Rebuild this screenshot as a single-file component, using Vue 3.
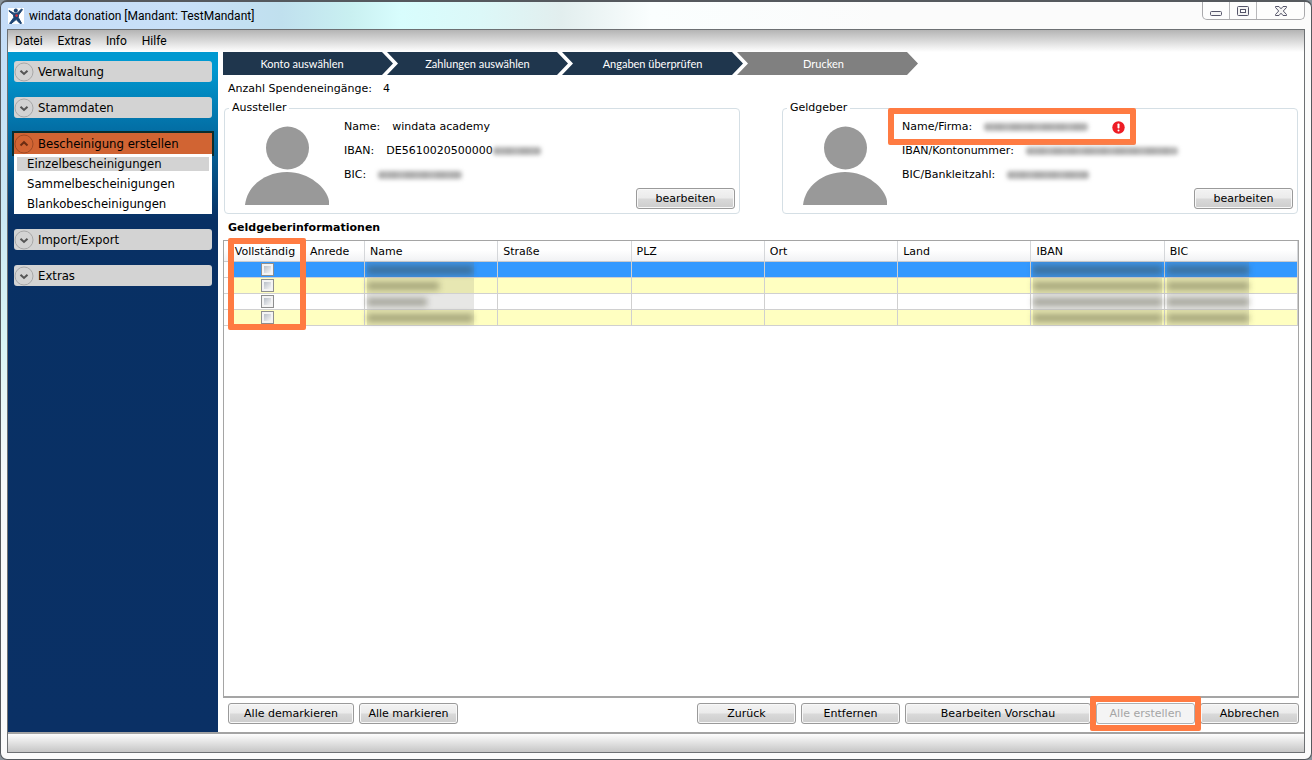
<script setup>
import { ref } from 'vue'

const menu = ['Datei', 'Extras', 'Info', 'Hilfe']

const sections = ref([
  { label: 'Verwaltung', open: false, items: [] },
  { label: 'Stammdaten', open: false, items: [] },
  {
    label: 'Bescheinigung erstellen',
    open: true,
    items: ['Einzelbescheinigungen', 'Sammelbescheinigungen', 'Blankobescheinigungen'],
  },
  { label: 'Import/Export', open: false, items: [] },
  { label: 'Extras', open: false, items: [] },
])
const activeItem = ref('Einzelbescheinigungen')

const steps = [
  { label: 'Konto auswählen', done: true },
  { label: 'Zahlungen auswählen', done: true },
  { label: 'Angaben überprüfen', done: true },
  { label: 'Drucken', done: false },
]

const columns = ['Anrede', 'Name', 'Straße', 'PLZ', 'Ort', 'Land', 'IBAN', 'BIC']
const rows = ref([
  { id: 1, complete: false, nameWidth: 106 },
  { id: 2, complete: false, nameWidth: 72 },
  { id: 3, complete: false, nameWidth: 60 },
  { id: 4, complete: false, nameWidth: 106 },
])
const selected = ref(1)
</script>

<template>
  <div class="window">
    <header class="titlebar">
      <svg class="logo" viewBox="0 0 16 16" aria-hidden="true">
        <rect width="16" height="16" fill="#fff" />
        <path d="M1 2.5 L6 5.2 L9.5 5 L13.5 1 L14.5 1.6 L10.5 7 L10.3 9.5 L13.5 15.3 L12 15.5 L8.2 11.500 L3 15.8 L1.6 15.4 L5.8 9.6 L5.6 7 L1 3.2 Z" fill="#1d4474" stroke="#1d4474" />
        <circle cx="7.800" cy="2.600" r="2" fill="#1d4474" />
        <circle cx="8.600" cy="7.600" r="1.300" fill="#d8343c" />
      </svg>
      <h1 class="title">windata donation [Mandant: TestMandant]</h1>
      <div class="controls">
        <button type="button" class="ctl" aria-label="Minimieren">
          <svg width="14" height="14" viewBox="0 0 14 14"><rect x="1.5" y="7.5" width="11" height="4" rx="1" fill="#f4f4f4" stroke="#55556a" /></svg>
        </button>
        <button type="button" class="ctl" aria-label="Maximieren">
          <svg width="14" height="14" viewBox="0 0 14 14"><rect x="1.5" y="2.5" width="11" height="9" rx="1" fill="#f4f4f4" stroke="#55556a" /><rect x="4.5" y="5.5" width="5" height="3" fill="#fff" stroke="#55556a" /></svg>
        </button>
        <button type="button" class="ctl close" aria-label="Schließen">
          <svg width="14" height="14" viewBox="0 0 14 14"><path d="M1.5 2.5 H5 L7 4.8 L9 2.5 H12.5 V3.5 L9.3 7 L12.5 10.5 V11.5 H9 L7 9.2 L5 11.5 H1.5 V10.5 L4.7 7 L1.5 3.5 Z" fill="#f4f4f4" stroke="#55556a" /></svg>
        </button>
      </div>
    </header>

    <div class="client">
      <nav class="menubar">
        <button v-for="m in menu" :key="m" type="button" class="menu-item">{{ m }}</button>
      </nav>

      <div class="body">
        <aside class="sidebar">
          <section v-for="s in sections" :key="s.label" class="group" :class="{ open: s.open }">
            <button type="button" class="group-head" :aria-expanded="s.open" @click="s.open = !s.open">
              <svg width="20" height="20" viewBox="0 0 20 20" aria-hidden="true">
                <circle cx="10" cy="10" r="9" fill="none" class="ring" />
                <path :d="s.open ? 'M6.5 11.5 L10 8.2 L13.5 11.5' : 'M6.5 8.7 L10 12 L13.5 8.7'" fill="none" class="arrow" />
              </svg>
              <span>{{ s.label }}</span>
            </button>
            <ul v-if="s.open && s.items.length" class="items">
              <li v-for="i in s.items" :key="i">
                <a href="#" :class="{ active: i === activeItem }" @click.prevent="activeItem = i">{{ i }}</a>
              </li>
            </ul>
          </section>
        </aside>

        <main class="main">
          <ol class="steps">
            <li v-for="s in steps" :key="s.label" :class="{ todo: !s.done }">{{ s.label }}</li>
          </ol>

          <p class="count"><span>Anzahl Spendeneingänge:</span><span>4</span></p>

          <div class="parties">
            <fieldset class="party">
              <legend>Aussteller</legend>
              <svg class="avatar" viewBox="0 0 84 79" aria-hidden="true">
                <circle cx="42.500" cy="22" r="21.500" />
                <path d="M0 79 C2 60 20 46 42 46 C64 46 82 62 84 75 V79 Z" />
              </svg>
              <dl>
                <div><dt>Name:</dt><dd>windata academy</dd></div>
                <div><dt>IBAN:</dt><dd>DE5610020500000<span class="smudge tail"></span></dd></div>
                <div><dt>BIC:</dt><dd><span class="smudge bic"></span></dd></div>
              </dl>
              <button type="button" class="btn edit">bearbeiten</button>
            </fieldset>

            <fieldset class="party">
              <legend>Geldgeber</legend>
              <svg class="avatar" viewBox="0 0 84 79" aria-hidden="true">
                <circle cx="42.500" cy="22" r="21.500" />
                <path d="M0 79 C2 60 20 46 42 46 C64 46 82 62 84 75 V79 Z" />
              </svg>
              <dl>
                <div class="marked">
                  <dt>Name/Firma:</dt>
                  <dd>
                    <span class="smudge firm"></span>
                    <svg class="error" width="13" height="13" viewBox="0 0 13 13" role="img" aria-label="Fehler">
                      <circle cx="6.500" cy="6.500" r="6.200" fill="#ee1c25" />
                      <rect x="5.500" y="2.500" width="2" height="5" rx="0.800" fill="#fff" />
                      <rect x="5.500" y="8.500" width="2" height="2" rx="1" fill="#fff" />
                    </svg>
                  </dd>
                </div>
                <div><dt>IBAN/Kontonummer:</dt><dd><span class="smudge iban"></span></dd></div>
                <div><dt>BIC/Bankleitzahl:</dt><dd><span class="smudge blz"></span></dd></div>
              </dl>
              <button type="button" class="btn edit">bearbeiten</button>
            </fieldset>
          </div>

          <h2 id="donors">Geldgeberinformationen</h2>

          <div class="grid">
            <table aria-labelledby="donors">
              <colgroup>
                <col class="c-head" />
                <col class="c-check" />
                <col class="c-title" />
                <col v-for="n in 7" :key="n" />
              </colgroup>
              <thead>
                <tr>
                  <th class="stub"></th>
                  <th class="mid">Vollständig</th>
                  <th v-for="c in columns" :key="c">{{ c }}</th>
                </tr>
              </thead>
              <tbody>
                <tr v-for="r in rows" :key="r.id" :class="{ selected: r.id === selected }" @click="selected = r.id">
                  <td class="stub"></td>
                  <td class="mid"><input v-model="r.complete" type="checkbox" aria-label="Vollständig" /></td>
                  <td v-for="c in columns" :key="c">
                    <span v-if="c === 'Name'" class="veil name"><i :style="{ width: r.nameWidth + 'px' }"></i></span>
                    <span v-else-if="c === 'IBAN'" class="veil full"><i></i></span>
                    <span v-else-if="c === 'BIC'" class="veil code"><i></i></span>
                  </td>
                </tr>
              </tbody>
            </table>
            <div class="mark-column"></div>
          </div>

          <div class="actions">
            <button type="button" class="btn w126">Alle demarkieren</button>
            <button type="button" class="btn w99">Alle markieren</button>
            <span class="spacer"></span>
            <button type="button" class="btn w99">Zurück</button>
            <button type="button" class="btn w99">Entfernen</button>
            <button type="button" class="btn w186">Bearbeiten Vorschau</button>
            <span class="marked-btn"><button type="button" class="btn w99" disabled>Alle erstellen</button></span>
            <button type="button" class="btn w99">Abbrechen</button>
          </div>
        </main>
      </div>

      <footer class="statusbar"></footer>
    </div>
  </div>
</template>

<style>
body {
  background: #8a949c;
}
</style>

<style scoped>
* {
  box-sizing: border-box;
}
.window {
  min-height: 100vh;
  display: flex;
  flex-direction: column;
  padding: 0 6px 6px;
  border: 1px solid #55595e;
  border-top: 2px solid #55595e;
  border-radius: 7px;
  background:
    linear-gradient(90deg, #c5dcf8 0, #c8e0f8 180px, #c0e0ee 280px, #c9f0f1 350px, #d8fdfd 400px, #dcf8f8 480px, #e2eeee 560px, #fafefe 650px, rgba(252, 252, 252, 0) 900px) 0 0 / 100% 29px no-repeat,
    linear-gradient(180deg, #c3dbf8 0, #cce9f4 220px, #dbf5f4 340px, #f6f8f9 480px, #fafafa 100%) 0 0 / 8px 100% no-repeat,
    #fbfbfb;
  font-family: "DejaVu Sans", Verdana, sans-serif;
  font-size: 11px;
  line-height: 16px;
  color: #000;
}
button {
  font: inherit;
  color: inherit;
  cursor: default;
}
.titlebar {
  height: 27px;
  display: flex;
  align-items: center;
}
.logo {
  width: 16px;
  height: 16px;
  margin-left: 1px;
}
.title {
  margin: 0 0 0 5px;
  font: 12px/16px Roboto, "Noto Sans", sans-serif;
}
.controls {
  margin-left: auto;
  align-self: flex-start;
  display: flex;
  height: 18px;
  border: 1px solid #a9a9ac;
  border-top: 0;
  border-radius: 0 0 5px 5px;
  background: #fdfdfd;
}
.ctl {
  width: 27px;
  padding: 0;
  border: 0;
  border-right: 1px solid #b8b8bb;
  background: none;
  display: flex;
  justify-content: center;
  align-items: center;
}
.ctl.close {
  width: 47px;
  border-right: 0;
}
.client {
  flex: 1;
  display: flex;
  flex-direction: column;
  border: 1px solid #6d7073;
  background: #fff;
}
.menubar {
  height: 22px;
  display: flex;
  align-items: center;
  background: linear-gradient(#b4b4b4, #fff);
}
.menu-item {
  padding: 0 8px 0 7px;
  border: 0;
  background: none;
  font: 12px/16px Roboto, "Noto Sans", sans-serif;
}
.body {
  flex: 1;
  display: flex;
}
.sidebar {
  width: 210px;
  padding: 9px 6px 0;
  background: linear-gradient(#0099d1 0, #0099d1 16px, #083064 168px, #0a3065 100%);
  font: 13px/20px "DejaVu Sans Condensed", Tahoma, sans-serif;
}
.group {
  margin-bottom: 15px;
}
.group-head {
  width: 100%;
  height: 21px;
  padding: 0 2px 0 0;
  border: 0;
  border-radius: 3px;
  background: #d3d3d3;
  display: flex;
  align-items: center;
  gap: 4px;
}
.ring {
  stroke: #a8a8a8;
}
.arrow {
  stroke: #555;
  stroke-width: 2;
}
.group.open .group-head {
  background: #d16433;
  border-radius: 0;
  outline: 2px solid #0b2d2d;
}
.open .ring {
  stroke: #a04a24;
}
.open .arrow {
  stroke: #6b2c12;
}
.items {
  position: relative;
  margin: 0;
  padding: 0 3px;
  list-style: none;
  background: #fff;
}
.items li {
  display: flow-root;
}
.items a {
  display: block;
  margin: 3px 0;
  padding-left: 10px;
  color: #000;
  text-decoration: none;
  line-height: 14px;
}
.items a.active {
  background: #d3d3d3;
}
.main {
  flex: 1;
  min-width: 0;
  display: flex;
  flex-direction: column;
  padding: 0 5px;
}
.steps {
  display: flex;
  margin: 0;
  padding: 0;
  list-style: none;
  color: #fff;
  font: 11px/23px Lato, "Open Sans", sans-serif;
}
.steps li {
  width: 181px;
  margin-right: -6px;
  text-align: center;
  background: #1f364d;
  clip-path: polygon(0 0, 170px 0, 100% 50%, 170px 100%, 0 100%, 11px 50%);
}
.steps li:first-child {
  width: 170px;
  padding-right: 12px;
  clip-path: polygon(0 0, 159px 0, 100% 50%, 159px 100%, 0 100%);
}
.steps li.todo {
  padding-right: 8px;
  background: #808080;
}
.count {
  margin: 6px 5px 3px;
  display: flex;
  gap: 11px;
}
.parties {
  display: flex;
  gap: 42px;
  padding: 0 1px;
}
.party {
  flex: 1;
  min-width: 0;
  height: 114px;
  margin: 0;
  padding: 0 20px;
  border: 1px solid #d5dfe5;
  border-radius: 4px;
  position: relative;
}
.party legend {
  margin-left: -16px;
  padding: 0 3px;
}
.avatar {
  float: left;
  width: 84px;
  height: 79px;
  margin-top: 10px;
  fill: #999;
}
.party dl {
  margin: 3px 0 0 99px;
}
.party dl > div {
  display: flex;
  align-items: center;
  gap: 12px;
  height: 16px;
  margin-bottom: 8px;
}
.party dd {
  margin: 0;
  display: flex;
  align-items: center;
}
.edit {
  position: absolute;
  right: 4px;
  bottom: 4px;
  width: 99px;
}
.smudge {
  height: 8px;
  border-radius: 3px;
  filter: blur(2px);
  background: repeating-linear-gradient(90deg, #aaa 0, #b4b4b4 9px, #ababab 16px, #bababa 23px, #aaa 31px);
}
.smudge.tail { width: 48px; }
.smudge.bic { width: 84px; }
.smudge.firm { width: 104px; }
.smudge.iban { width: 152px; }
.smudge.blz { width: 82px; }
.error {
  margin-left: 24px;
}
.marked,
.marked-btn {
  position: relative;
}
.marked {
  width: 220px;
}
.marked::after,
.marked-btn::after,
.mark-column {
  content: "";
  position: absolute;
  border: 6px solid #ff7b42;
  border-radius: 2px;
  pointer-events: none;
}
.marked::after {
  inset: -11px -14px -10px;
}
.marked-btn::after {
  inset: -7px -6px;
  z-index: 1;
}
.mark-column {
  top: -3px;
  left: 4px;
  width: 78px;
  height: 92px;
}
h2 {
  margin: 6px 5px 4px;
  font-size: 11px;
  line-height: 16px;
}
.grid {
  flex: 1;
  position: relative;
  border: 1px solid #a5a5a5;
  border-bottom-width: 2px;
}
table {
  width: 100%;
  table-layout: fixed;
  border-collapse: separate;
  border-spacing: 0;
}
.c-head { width: 6px; }
.c-check { width: 75px; }
.c-title { width: 60px; }
th {
  height: 21px;
  padding: 1px 5px 0;
  border-right: 1px solid #d5d7da;
  border-bottom: 1px solid #c9cbce;
  background: linear-gradient(#fff 0, #fff 45%, #f1f2f4 100%);
  font-weight: 400;
  text-align: left;
}
th.stub,
td.stub {
  padding: 0;
}
th.mid {
  padding: 1px 4px 0 0;
  text-align: center;
}
td {
  height: 16px;
  padding: 0 2px;
  border-right: 1px solid #d0d0d0;
  border-bottom: 1px solid #d0d0d0;
  line-height: 0;
}
td.mid {
  padding: 0;
  text-align: center;
}
tbody tr:nth-child(even) td {
  background: #ffffc1;
}
tbody tr.selected td {
  background: #3399ff;
}
tbody tr td.stub {
  background: #fff;
}
input[type="checkbox"] {
  appearance: none;
  width: 13px;
  height: 13px;
  margin: 0;
  padding: 2px;
  border: 1px solid #8e8f8f;
  background: linear-gradient(135deg, #b8bfc8, #f6f6f6) content-box, #f4f4f4;
}
.veil {
  display: flex;
  align-items: center;
  height: 15px;
  background: rgba(120, 120, 110, 0.18);
}
.veil i {
  width: 100%;
  height: 8px;
  background: rgba(50, 50, 25, 0.36);
  filter: blur(3px);
}
.veil.name { width: 107px; }
.veil.code { width: 82px; }
.actions {
  display: flex;
  gap: 5px;
  padding: 5px 0 8px 5px;
}
.spacer {
  flex: 1;
}
.btn {
  height: 21px;
  padding: 0;
  border: 1px solid #9a9a9a;
  border-radius: 3px;
  background: linear-gradient(#f3f3f3 0, #ebebeb 48%, #d9d9d9 52%, #cdcdcd 100%);
  box-shadow: inset 0 0 0 1px #f8f8f8;
  line-height: 18px;
}
.btn:disabled {
  background: #f4f4f4;
  border-color: #adb2b5;
  color: #a5a5a5;
}
.w126 { width: 126px; }
.w99 { width: 99px; }
.w186 { width: 186px; }
.statusbar {
  height: 20px;
  border-top: 2px solid #a3a3a3;
  background: linear-gradient(#fdfdfd, #c6c6c6);
}
</style>
